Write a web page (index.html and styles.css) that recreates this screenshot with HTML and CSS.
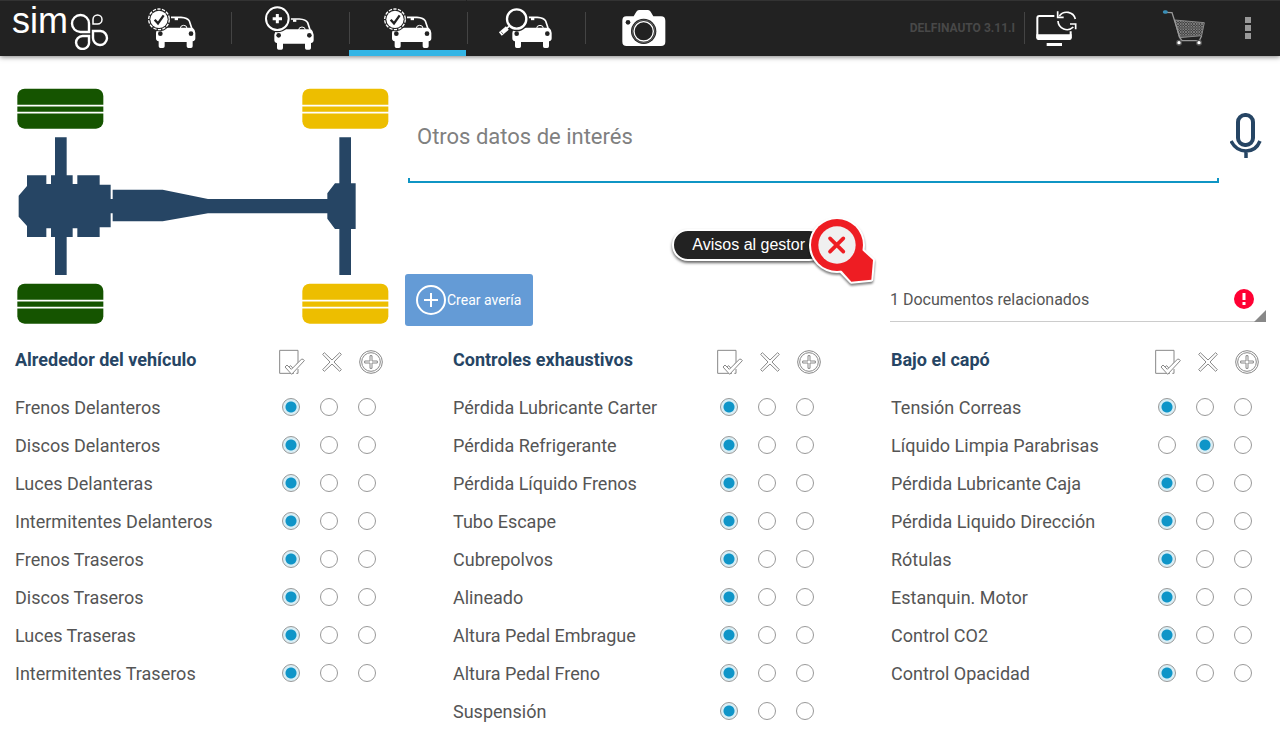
FILE: index.html
```html
<!DOCTYPE html>
<html lang="es">
<head>
<meta charset="utf-8">
<meta name="viewport" content="width=device-width, initial-scale=1">
<title>Sima - Revisión del vehículo</title>
<link rel="stylesheet" href="styles.css">
</head>
<body>
<svg class="defs" aria-hidden="true">
  <defs>
    <symbol id="car" viewBox="0 0 120 96" overflow="visible">
      <path class="solid" d="M9 34Q2 39 1 50V66Q1 74 9 75V90Q9 95 14 95H22Q27 95 27 90V77H93V90Q93 95 98 95H106Q111 95 111 90V75Q119 74 119 66V50Q118 39 111 34Z"/>
      <circle class="hole" cx="14" cy="52" r="7"/><circle class="hole" cx="106" cy="52" r="7"/>
      <path class="line" d="M46 3H76Q96 4 101 14L108 35" stroke-width="5"/>
      <path class="line" d="M57 8H67" stroke-width="7"/>
      <path class="line" d="M74 36A10 9 0 0 1 94 36" stroke-width="3"/>
    </symbol>
    <symbol id="car-check" viewBox="0 0 150 132">
      <use href="#car" x="26" y="31" width="120" height="96"/>
      <circle class="hole" cx="36" cy="40" r="36"/>
      <circle class="line" cx="36" cy="40" r="31" stroke-width="4" stroke-dasharray="10 4"/>
      <circle class="solid" cx="36" cy="40" r="26"/>
      <path class="cut" d="M23 41L33 52L50 28" stroke-width="7"/>
    </symbol>
    <symbol id="h-check" viewBox="0 0 78 78">
      <path class="outline" d="M2 4H57V40L44 60L35 50L27 57L44 73H2ZM57 60V73H52"/>
      <path class="outline" d="M18 54L24 48L37 61L68 30Q74 30 76 35L38 76Z"/>
    </symbol>
    <symbol id="h-cross" viewBox="0 0 60 60">
      <path class="outline" d="M7 2L30 24L53 2L58 7L36 30L58 53L53 58L30 36L7 58L2 53L24 30L2 7Z"/>
    </symbol>
    <symbol id="h-plus" viewBox="0 0 72 72">
      <circle class="outline" cx="36" cy="36" r="34"/><circle class="outline" cx="36" cy="36" r="28"/>
      <path class="outline" d="M33 17H39V33H55V39H39V55H33V39H17V33H33Z"/>
    </symbol>
  </defs>
</svg>

<header class="bar">
  <a class="logo" href="#" aria-label="Sima">
    <span class="logo-text">sim</span>
    <svg width="40" height="38" viewBox="70 12 40 38" aria-hidden="true">
      <g fill="none" stroke="#fff" stroke-width="2.400">
        <path d="M89 32H80.500A8.500 8.500 0 1 1 89 23.500Z"/>
        <path d="M93 24V19.500A4.500 4.500 0 1 1 97.500 24Z" stroke-width="1.500"/>
        <path d="M93 31H100.500A7 7 0 1 1 93 38Z"/>
        <path d="M89 36V41.500A6.500 6.500 0 1 1 82.500 36Z"/>
      </g>
    </svg>
  </a>
  <nav class="tabs">
    <a class="tab" href="#" aria-label="Revisión"><svg class="tab-icon"><use href="#car-check"/></svg></a>
    <a class="tab" href="#" aria-label="Nuevo vehículo">
      <svg class="tab-icon" viewBox="0 0 150 132">
        <use href="#car" x="27" y="36" width="120" height="96"/>
        <circle class="hole" cx="37" cy="38" r="41"/>
        <circle class="line" cx="37" cy="38" r="34" stroke-width="6"/>
        <path class="line" d="M37 24V52M23 38H51" stroke-width="9"/>
      </svg>
    </a>
    <a class="tab active" href="#" aria-current="page" aria-label="Controles"><svg class="tab-icon"><use href="#car-check"/></svg></a>
    <a class="tab" href="#" aria-label="Buscar vehículo">
      <svg class="tab-icon" viewBox="0 0 150 132">
        <use href="#car" x="33" y="31" width="120" height="96"/>
        <circle class="hole" cx="47" cy="39" r="37"/>
        <circle class="line" cx="47" cy="39" r="29" stroke-width="7"/>
        <path class="line" d="M24 61L17 67" stroke-width="5"/>
        <path class="line" d="M19 66L-2 84" stroke-width="13"/>
        <path class="cut" d="M6 84L0 77" stroke-width="2"/>
      </svg>
    </a>
    <a class="tab" href="#" aria-label="Cámara">
      <svg class="tab-icon" viewBox="1 0 150 132">
        <path class="solid" d="M23 31H45L53 17Q56 12 61 12H88Q93 12 96 17L104 31H127Q140 31 140 44V107Q140 120 127 120H24Q11 120 11 107V44Q11 31 23 31Z"/>
        <circle class="hole" cx="28" cy="49" r="7"/>
        <circle class="hole" cx="75" cy="76" r="38"/>
        <circle class="line" cx="75" cy="76" r="34" stroke-width="2" stroke-opacity=".4"/>
        <circle class="line" cx="75" cy="76" r="29" stroke-width="4"/>
      </svg>
    </a>
  </nav>
  <div class="tools">
    <span class="version">DELFINAUTO 3.11.I</span>
    <button class="tool sync" type="button" aria-label="Sincronizar">
      <svg width="45" height="40" viewBox="0 0 135 120" aria-hidden="true">
        <path class="line" d="M61 24H16Q10 24 10 30V88H110V70" stroke-width="6"/>
        <path class="solid" d="M7 79H113V90Q113 96 107 96H13Q7 96 7 90ZM38 105H84V114H38Z"/>
        <g class="line" stroke-width="5"><path d="M76 24A27 27 0 0 1 124 33M72 39A27 27 0 0 0 118 57"/><path d="M71 10V28H89M108 48H125V64"/></g>
      </svg>
    </button>
    <button class="tool" type="button" aria-label="Carrito">
      <svg width="44" height="40" viewBox="0 0 132 120" aria-hidden="true">
        <defs><pattern id="mesh" width="8" height="8" patternUnits="userSpaceOnUse"><rect width="8" height="8" fill="#333"/><path d="M0 0L8 8M8 0L0 8" stroke="#999" stroke-width="2"/></pattern></defs>
        <path d="M38 36L127 44L119 83L52 89Z" fill="url(#mesh)" stroke="#888" stroke-width="3"/>
        <path d="M10 13L30 14L54 90L60 98H112L119 83" fill="none" stroke="#999" stroke-width="4"/>
        <path d="M8 12L12 12" stroke="#3a8fb7" stroke-width="11" stroke-linecap="round"/>
        <g fill="#fff" stroke="#555" stroke-width="4"><circle cx="51" cy="104" r="7"/><circle cx="111" cy="104" r="7"/></g>
      </svg>
    </button>
    <button class="tool more" type="button" aria-label="Más opciones">
      <svg width="6" height="22" viewBox="0 0 6 22" aria-hidden="true"><path d="M0 0H6V6H0ZM0 8H6V14H0ZM0 16H6V22H0Z" fill="#999"/></svg>
    </button>
  </div>
</header>

<main>
  <section class="overview">
    <svg class="chassis" viewBox="45 18 1125 720" role="img" aria-label="Estado de los neumáticos">
      <g fill="#155400"><rect x="52" y="26" width="258" height="120" rx="22"/><rect x="52" y="611" width="258" height="120" rx="22"/></g>
      <g fill="#edbe00"><rect x="907" y="26" width="258" height="120" rx="22"/><rect x="907" y="611" width="258" height="120" rx="22"/></g>
      <path d="M50 77H312M50 98H312M50 662H312M50 683H312M905 77H1167M905 98H1167M905 662H1167M905 683H1167" stroke="#fff" stroke-width="5"/>
      <path fill="#264564" d="M56 347L81 318V286H139V312H153V286H165V172H200V286H218V312H232V286H299V314H332V357H338V329H488L624 357H982V340L1005 310H1018V172H1053V310H1067V447H1053V585H1018V447H1005L982 416V400H624L488 424H338V400H332V442H299V471H232V445H218V471H200V585H165V471H153V445H139V471H81V438L56 410Z"/>
    </svg>
    <div class="details">
      <div class="note">
        <input class="note-input" type="text" placeholder="Otros datos de interés" aria-label="Otros datos de interés">
        <button class="mic" type="button" aria-label="Dictar">
          <svg width="32" height="46" viewBox="0 0 32 46" aria-hidden="true"><g fill="none" stroke="#264564"><rect x="8" y="2" width="15" height="30" rx="7" stroke-width="4"/><path d="M1 28Q6 38 16 38T30 28M16 38V45" stroke-width="3.500"/></g></svg>
        </button>
      </div>
      <div class="actions">
        <button class="create" type="button">
          <svg width="30" height="30" viewBox="0 0 30 30" aria-hidden="true"><g fill="none" stroke="#fff" stroke-width="2"><circle cx="15" cy="15" r="14"/><path d="M15 8V22M8 15H22"/></g></svg>
          <span>Crear avería</span>
        </button>
        <button class="alerts" type="button">
          <span class="alerts-label">Avisos al gestor</span>
          <svg class="alerts-pin" width="71" height="72" viewBox="441 30 213 216" aria-hidden="true">
            <g fill="#fff" stroke="#fff" stroke-width="12" stroke-linejoin="round"><circle cx="531" cy="120" r="78"/><path d="M603 132L639 165L634 224L574 230L545 200Z"/></g>
            <g fill="#ee1d23"><circle cx="531" cy="120" r="78"/><path d="M603 132L639 165L634 224L574 230L540 192Z"/></g>
            <circle cx="531" cy="120" r="56" fill="#f0f0f0"/>
            <path d="M510 100L550 140M550 100L510 140" stroke="#ee1d23" stroke-width="11" stroke-linecap="round"/>
          </svg>
        </button>
        <div class="docs">
          <select class="docs-select" aria-label="Documentos relacionados"><option>1 Documentos relacionados</option></select>
          <svg class="docs-alert" width="20" height="20" viewBox="0 0 20 20" aria-hidden="true"><circle cx="10" cy="10" r="10" fill="#ff0033"/><path d="M10 4V11M10 13V16" stroke="#fff" stroke-width="3"/></svg>
        </div>
      </div>
    </div>
  </section>

  <section class="checks">
    <div class="group">
      <div class="group-head"><h2>Alrededor del vehículo</h2><svg width="26" height="26"><use href="#h-check"/></svg><svg width="20" height="20"><use href="#h-cross"/></svg><svg width="24" height="24"><use href="#h-plus"/></svg></div>
      <div class="row" role="radiogroup" aria-labelledby="a1"><span id="a1">Frenos Delanteros</span><input type="radio" name="a1" aria-label="Correcto" checked><input type="radio" name="a1" aria-label="Incorrecto"><input type="radio" name="a1" aria-label="Añadir"></div>
      <div class="row" role="radiogroup" aria-labelledby="a2"><span id="a2">Discos Delanteros</span><input type="radio" name="a2" aria-label="Correcto" checked><input type="radio" name="a2" aria-label="Incorrecto"><input type="radio" name="a2" aria-label="Añadir"></div>
      <div class="row" role="radiogroup" aria-labelledby="a3"><span id="a3">Luces Delanteras</span><input type="radio" name="a3" aria-label="Correcto" checked><input type="radio" name="a3" aria-label="Incorrecto"><input type="radio" name="a3" aria-label="Añadir"></div>
      <div class="row" role="radiogroup" aria-labelledby="a4"><span id="a4">Intermitentes Delanteros</span><input type="radio" name="a4" aria-label="Correcto" checked><input type="radio" name="a4" aria-label="Incorrecto"><input type="radio" name="a4" aria-label="Añadir"></div>
      <div class="row" role="radiogroup" aria-labelledby="a5"><span id="a5">Frenos Traseros</span><input type="radio" name="a5" aria-label="Correcto" checked><input type="radio" name="a5" aria-label="Incorrecto"><input type="radio" name="a5" aria-label="Añadir"></div>
      <div class="row" role="radiogroup" aria-labelledby="a6"><span id="a6">Discos Traseros</span><input type="radio" name="a6" aria-label="Correcto" checked><input type="radio" name="a6" aria-label="Incorrecto"><input type="radio" name="a6" aria-label="Añadir"></div>
      <div class="row" role="radiogroup" aria-labelledby="a7"><span id="a7">Luces Traseras</span><input type="radio" name="a7" aria-label="Correcto" checked><input type="radio" name="a7" aria-label="Incorrecto"><input type="radio" name="a7" aria-label="Añadir"></div>
      <div class="row" role="radiogroup" aria-labelledby="a8"><span id="a8">Intermitentes Traseros</span><input type="radio" name="a8" aria-label="Correcto" checked><input type="radio" name="a8" aria-label="Incorrecto"><input type="radio" name="a8" aria-label="Añadir"></div>
    </div>
    <div class="group">
      <div class="group-head"><h2>Controles exhaustivos</h2><svg width="26" height="26"><use href="#h-check"/></svg><svg width="20" height="20"><use href="#h-cross"/></svg><svg width="24" height="24"><use href="#h-plus"/></svg></div>
      <div class="row" role="radiogroup" aria-labelledby="b1"><span id="b1">Pérdida Lubricante Carter</span><input type="radio" name="b1" aria-label="Correcto" checked><input type="radio" name="b1" aria-label="Incorrecto"><input type="radio" name="b1" aria-label="Añadir"></div>
      <div class="row" role="radiogroup" aria-labelledby="b2"><span id="b2">Pérdida Refrigerante</span><input type="radio" name="b2" aria-label="Correcto" checked><input type="radio" name="b2" aria-label="Incorrecto"><input type="radio" name="b2" aria-label="Añadir"></div>
      <div class="row" role="radiogroup" aria-labelledby="b3"><span id="b3">Pérdida Líquido Frenos</span><input type="radio" name="b3" aria-label="Correcto" checked><input type="radio" name="b3" aria-label="Incorrecto"><input type="radio" name="b3" aria-label="Añadir"></div>
      <div class="row" role="radiogroup" aria-labelledby="b4"><span id="b4">Tubo Escape</span><input type="radio" name="b4" aria-label="Correcto" checked><input type="radio" name="b4" aria-label="Incorrecto"><input type="radio" name="b4" aria-label="Añadir"></div>
      <div class="row" role="radiogroup" aria-labelledby="b5"><span id="b5">Cubrepolvos</span><input type="radio" name="b5" aria-label="Correcto" checked><input type="radio" name="b5" aria-label="Incorrecto"><input type="radio" name="b5" aria-label="Añadir"></div>
      <div class="row" role="radiogroup" aria-labelledby="b6"><span id="b6">Alineado</span><input type="radio" name="b6" aria-label="Correcto" checked><input type="radio" name="b6" aria-label="Incorrecto"><input type="radio" name="b6" aria-label="Añadir"></div>
      <div class="row" role="radiogroup" aria-labelledby="b7"><span id="b7">Altura Pedal Embrague</span><input type="radio" name="b7" aria-label="Correcto" checked><input type="radio" name="b7" aria-label="Incorrecto"><input type="radio" name="b7" aria-label="Añadir"></div>
      <div class="row" role="radiogroup" aria-labelledby="b8"><span id="b8">Altura Pedal Freno</span><input type="radio" name="b8" aria-label="Correcto" checked><input type="radio" name="b8" aria-label="Incorrecto"><input type="radio" name="b8" aria-label="Añadir"></div>
      <div class="row" role="radiogroup" aria-labelledby="b9"><span id="b9">Suspensión</span><input type="radio" name="b9" aria-label="Correcto" checked><input type="radio" name="b9" aria-label="Incorrecto"><input type="radio" name="b9" aria-label="Añadir"></div>
    </div>
    <div class="group">
      <div class="group-head"><h2>Bajo el capó</h2><svg width="26" height="26"><use href="#h-check"/></svg><svg width="20" height="20"><use href="#h-cross"/></svg><svg width="24" height="24"><use href="#h-plus"/></svg></div>
      <div class="row" role="radiogroup" aria-labelledby="c1"><span id="c1">Tensión Correas</span><input type="radio" name="c1" aria-label="Correcto" checked><input type="radio" name="c1" aria-label="Incorrecto"><input type="radio" name="c1" aria-label="Añadir"></div>
      <div class="row" role="radiogroup" aria-labelledby="c2"><span id="c2">Líquido Limpia Parabrisas</span><input type="radio" name="c2" aria-label="Correcto"><input type="radio" name="c2" aria-label="Incorrecto" checked><input type="radio" name="c2" aria-label="Añadir"></div>
      <div class="row" role="radiogroup" aria-labelledby="c3"><span id="c3">Pérdida Lubricante Caja</span><input type="radio" name="c3" aria-label="Correcto" checked><input type="radio" name="c3" aria-label="Incorrecto"><input type="radio" name="c3" aria-label="Añadir"></div>
      <div class="row" role="radiogroup" aria-labelledby="c4"><span id="c4">Pérdida Liquido Dirección</span><input type="radio" name="c4" aria-label="Correcto" checked><input type="radio" name="c4" aria-label="Incorrecto"><input type="radio" name="c4" aria-label="Añadir"></div>
      <div class="row" role="radiogroup" aria-labelledby="c5"><span id="c5">Rótulas</span><input type="radio" name="c5" aria-label="Correcto" checked><input type="radio" name="c5" aria-label="Incorrecto"><input type="radio" name="c5" aria-label="Añadir"></div>
      <div class="row" role="radiogroup" aria-labelledby="c6"><span id="c6">Estanquin. Motor</span><input type="radio" name="c6" aria-label="Correcto" checked><input type="radio" name="c6" aria-label="Incorrecto"><input type="radio" name="c6" aria-label="Añadir"></div>
      <div class="row" role="radiogroup" aria-labelledby="c7"><span id="c7">Control CO2</span><input type="radio" name="c7" aria-label="Correcto" checked><input type="radio" name="c7" aria-label="Incorrecto"><input type="radio" name="c7" aria-label="Añadir"></div>
      <div class="row" role="radiogroup" aria-labelledby="c8"><span id="c8">Control Opacidad</span><input type="radio" name="c8" aria-label="Correcto" checked><input type="radio" name="c8" aria-label="Incorrecto"><input type="radio" name="c8" aria-label="Añadir"></div>
    </div>
  </section>
</main>
</body>
</html>
```

FILE: styles.css
```css
* { box-sizing: border-box; }
body { margin: 0; background: #fff; color: #555; font-family: Roboto, "Liberation Sans", sans-serif; }
button { margin: 0; padding: 0; border: 0; background: none; font: inherit; color: inherit; cursor: pointer; }
svg { display: block; flex: none; }

.defs { position: absolute; width: 0; height: 0; }
.solid { fill: #fff; }
.hole { fill: #222; }
.line { fill: none; stroke: #fff; }
.cut { fill: none; stroke: #222; }
.outline { fill: #fff; stroke: #888; stroke-width: 3; stroke-linejoin: round; }

.bar { display: flex; height: 56px; background: #222; box-shadow: inset 0 1px #333, 0 1px 5px rgba(0, 0, 0, .5); }
.logo { display: flex; width: 113px; padding-left: 12px; color: #fff; text-decoration: none; }
.logo-text { width: 58px; font: 36px/42px "Liberation Sans", sans-serif; }
.logo svg { margin-top: 12px; }

.tabs { display: flex; }
.tab { position: relative; display: flex; align-items: center; justify-content: center; width: 118px; }
.tab:not(:last-child)::after { content: ""; position: absolute; right: -1px; top: 12px; width: 1px; height: 32px; background: #444; }
.tab.active { box-shadow: inset -1px 0 #222, inset 0 -6px #33b5e5; }
.tab-icon { width: 50px; height: 44px; overflow: visible; }

.tools { display: flex; align-items: center; margin-left: auto; padding-right: 29px; }
.version { padding-right: 9px; color: #484848; font-size: 12px; font-weight: 700; }
.sync { display: flex; align-items: center; height: 32px; margin-right: 83px; padding-left: 9px; border-left: 1px solid #444; }
.more { margin-left: 39px; }

.overview { display: flex; gap: 15px; padding: 30px 14px 8px 15px; }
.chassis { width: 375px; height: 240px; }
.details { display: flex; flex: 1; flex-direction: column; gap: 32px; padding-top: 3px; }
.note { display: flex; align-items: center; gap: 11px; padding: 0 4px 0 3px; }
.note-input {
  flex: 1; min-width: 0; height: 94px; padding: 0 9px; border: 0; outline: 0; color: #333; font: 22px Roboto, sans-serif;
  background: linear-gradient(#0f95c4, #0f95c4) bottom / 100% 2px no-repeat,
    linear-gradient(#0f95c4, #0f95c4) left bottom / 2px 5px no-repeat,
    linear-gradient(#0f95c4, #0f95c4) right bottom / 2px 5px no-repeat;
}
.note-input::placeholder { color: #808080; opacity: 1; }

.actions { display: flex; align-items: flex-end; height: 111px; }
.create { display: flex; align-items: center; gap: 1px; height: 52px; padding: 0 12px 0 11px; border-radius: 3px; background: #649bd6; color: #fff; font-size: 14px; }
.alerts { display: flex; align-items: flex-start; align-self: flex-start; margin-left: auto; }
.alerts-label {
  height: 32px; margin: 14px -18px 0 0; padding: 0 18px; border: 2px solid #fff; border-radius: 16px; background: #222;
  box-shadow: 0 2px 3px rgba(0, 0, 0, .6); color: #fff; font: 16px/28px "Liberation Sans", sans-serif;
}
.alerts-pin { filter: drop-shadow(0 2px 1px rgba(0, 0, 0, .5)); }
.docs { position: relative; width: 376px; margin: 0 0 4px 12px; }
.docs::after { content: ""; position: absolute; right: 0; bottom: 0; border: 6px solid #888; border-top-color: transparent; border-left-color: transparent; pointer-events: none; }
.docs-select { appearance: none; display: block; width: 100%; height: 45px; padding: 0; border: 0; border-bottom: 1px solid #ccc; border-radius: 0; background: none; color: #555; font: 16px Roboto, sans-serif; }
.docs-alert { position: absolute; right: 12px; top: 12px; pointer-events: none; }

.checks { display: grid; grid-template-columns: repeat(3, 1fr); column-gap: 67px; padding: 0 18px 0 15px; }
.group-head { display: flex; align-items: center; gap: 17px; height: 54px; padding: 1px 3px 0 0; }
.group-head h2 { flex: 1; margin: 0; padding-bottom: 4px; color: #264564; font-size: 18px; line-height: 22px; font-weight: 700; }
.row { display: flex; align-items: center; gap: 20px; height: 38px; padding-right: 10px; font-size: 18px; }
.row span { flex: 1; white-space: nowrap; }
.row input { appearance: none; flex: none; width: 18px; height: 18px; margin: 0; border: 1px solid #999; border-radius: 50%; background: #fff; }
.row input:checked { background: radial-gradient(circle, #0f95c8 5px, #d9eef5 6px); }
```
